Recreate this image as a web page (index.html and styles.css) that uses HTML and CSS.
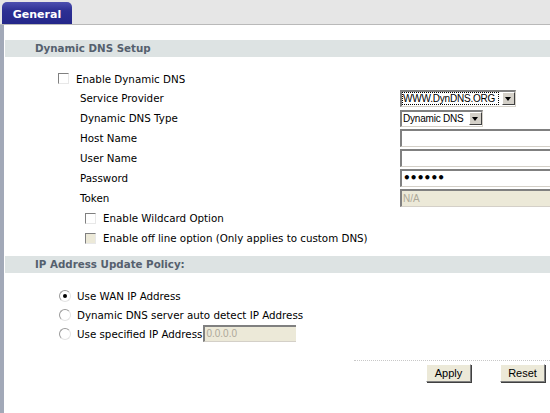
FILE: index.html
```html
<!DOCTYPE html>
<html>
<head>
<meta charset="utf-8">
<link rel="stylesheet" href="styles.css">
</head>
<body>
<div class="topbar">
  <div class="tab">General</div>
</div>
<div class="main">
  <div class="section-head">Dynamic DNS Setup</div>
  <div class="form">
    <div class="chkrow top"><span class="chk"></span><span>Enable Dynamic DNS</span></div>
    <div class="row"><span class="label">Service Provider</span><span class="sel sel1"><span class="seltext dotted">WWW.DynDNS.ORG</span><span class="arrow"></span></span></div>
    <div class="row"><span class="label">Dynamic DNS Type</span><span class="sel sel2"><span class="seltext">Dynamic DNS</span><span class="arrow"></span></span></div>
    <div class="row"><span class="label">Host Name</span><span class="txt"></span></div>
    <div class="row"><span class="label">User Name</span><span class="txt"></span></div>
    <div class="row"><span class="label">Password</span><span class="txt pw">&#8226;&#8226;&#8226;&#8226;&#8226;&#8226;</span></div>
    <div class="row"><span class="label">Token</span><span class="txt dis">N/A</span></div>
    <div class="chkrow sub"><span class="chk"></span><span>Enable Wildcard Option</span></div>
    <div class="chkrow sub"><span class="chk disabled"></span><span>Enable off line option (Only applies to custom DNS)</span></div>
  </div>
  <div class="section-head">IP Address Update Policy:</div>
  <div class="radios">
    <div class="radrow"><span class="radio on"></span><span>Use WAN IP Address</span></div>
    <div class="radrow"><span class="radio"></span><span>Dynamic DNS server auto detect IP Address</span></div>
    <div class="radrow"><span class="radio"></span><span>Use specified IP Address</span><span class="ipbox">0.0.0.0</span></div>
  </div>
  <div class="footer">
    <div class="dots"></div>
    <div class="buttons">
      <span class="btn">Apply</span>
      <span class="btn">Reset</span>
    </div>
  </div>
</div>
</body>
</html>
```
FILE: styles.css
```css
html, body {
  margin: 0;
  padding: 0;
  background: #ffffff;
  width: 550px;
  height: 413px;
  overflow: hidden;
  font-family: "DejaVu Sans", Verdana, sans-serif;
  font-size: 10.3px;
  color: #000;
}
.topbar {
  height: 24px;
  background: #e6e6e6;
  border-bottom: 1px solid #b9b9b9;
  display: flex;
  align-items: flex-end;
  padding-left: 2px;
  box-sizing: content-box;
}
.tab {
  width: 70px;
  height: 22px;
  box-sizing: border-box;
  background: linear-gradient(#4d50b0, #2c2f93 40%, #24278a);
  border-radius: 5px 5px 0 0;
  color: #fff;
  font-weight: bold;
  font-size: 11px;
  display: flex;
  align-items: center;
  justify-content: center;
  padding-top: 2px;
}
.main {
  border-left: 4px solid #a2a9b8;
  height: 388px;
  padding-top: 15px;
  box-sizing: border-box;
  padding-left: 1px;
}
.section-head {
  background: #dde3e3;
  height: 17px;
  line-height: 17px;
  padding-left: 30px;
  font-weight: bold;
  color: #55606e;
}
.form {
  padding-top: 12px;
  height: 199px;
  box-sizing: border-box;
}
.row {
  display: flex;
  align-items: center;
  height: 20px;
  padding-left: 75px;
}
.label {
  width: 320px;
  flex: none;
}
.chkrow {
  display: flex;
  align-items: center;
  height: 20px;
}
.chkrow.top { padding-left: 53px; height: 19px; }
.chkrow.sub { padding-left: 80px; }
.chk {
  width: 11px;
  height: 11px;
  box-sizing: border-box;
  border-top: 1px solid #808080;
  border-left: 1px solid #808080;
  border-right: 1px solid #e8e8e8;
  border-bottom: 1px solid #e8e8e8;
  background: #fff;
  margin-right: 7px;
  flex: none;
}
.chk.disabled { background: #ece9d8; }
.sel {
  display: flex;
  align-items: center;
  height: 17px;
  box-sizing: border-box;
  border-top: 2px solid #808080;
  border-left: 2px solid #808080;
  border-bottom: 1px solid #d4d0c8;
  border-right: 1px solid #d4d0c8;
  background: #fff;
  font-family: "Liberation Sans", Arial, sans-serif;
  font-size: 10px;
  letter-spacing: -0.2px;
}
.sel1 { width: 116px; }
.sel2 { width: 83px; }
.seltext {
  flex: 1;
  height: 13px;
  line-height: 13px;
  padding-left: 1px;
  white-space: nowrap;
  overflow: hidden;
}
.seltext.dotted { outline: 1px dotted #000; outline-offset: -1px; margin-right: 3px; }
.arrow {
  width: 13px;
  height: 13px;
  box-sizing: border-box;
  background: #d4d0c8;
  border-top: 1px solid #fff;
  border-left: 1px solid #fff;
  border-right: 1px solid #404040;
  border-bottom: 1px solid #404040;
  position: relative;
  flex: none;
}
.arrow::after {
  content: "";
  position: absolute;
  left: 2px;
  top: 4px;
  border-left: 3.5px solid transparent;
  border-right: 3.5px solid transparent;
  border-top: 4px solid #000;
}
.txt {
  flex: none;
  width: 160px;
  height: 18px;
  box-sizing: border-box;
  border-top: 2px solid #808080;
  border-left: 2px solid #808080;
  border-bottom: 1px solid #d4d0c8;
  background: #fff;
  font-family: "Liberation Sans", Arial, sans-serif;
  font-size: 10px;
  line-height: 15px;
  padding-left: 1px;
}
.txt.pw { font-family: "DejaVu Sans", sans-serif; font-size: 12px; font-weight: bold; letter-spacing: -0.8px; line-height: 14px; }
.txt.dis { background: #ece9d8; color: #aca899; }
.radios {
  padding-top: 13px;
  padding-left: 54px;
}
.radrow {
  display: flex;
  align-items: center;
  height: 19px;
}
.radio {
  width: 12px;
  height: 12px;
  box-sizing: border-box;
  border-radius: 50%;
  border: 1px solid #9a9a9a;
  border-right-color: #e4e4e4;
  border-bottom-color: #e4e4e4;
  background: #fff;
  margin-right: 6px;
  flex: none;
  position: relative;
}
.radio.on::after {
  content: "";
  position: absolute;
  left: 3px;
  top: 3px;
  width: 4px;
  height: 4px;
  border-radius: 50%;
  background: #000;
}
.ipbox {
  width: 93px;
  height: 17px;
  box-sizing: border-box;
  border-top: 2px solid #808080;
  border-left: 2px solid #808080;
  border-bottom: 1px solid #d4d0c8;
  background: #ece9d8;
  color: #aca899;
  font-family: "Liberation Sans", Arial, sans-serif;
  font-size: 10px;
  line-height: 14px;
  padding-left: 1px;
  margin-left: 1px;
}
.footer {
  padding-top: 17px;
  display: flex;
  flex-direction: column;
  align-items: flex-end;
}
.dots {
  width: 196px;
  border-top: 1px dotted #c8c8c8;
}
.buttons {
  display: flex;
  gap: 29px;
  padding-top: 3px;
  padding-right: 5px;
}
.btn {
  width: 45px;
  height: 18px;
  box-sizing: border-box;
  background: #ece9d8;
  border-top: 1px solid #fff;
  border-left: 1px solid #fff;
  border-right: 1px solid #808080;
  border-bottom: 1px solid #808080;
  box-shadow: 1px 1px 0 #404040;
  font-family: "Liberation Sans", Arial, sans-serif;
  font-size: 11px;
  display: flex;
  align-items: center;
  justify-content: center;
}
```
